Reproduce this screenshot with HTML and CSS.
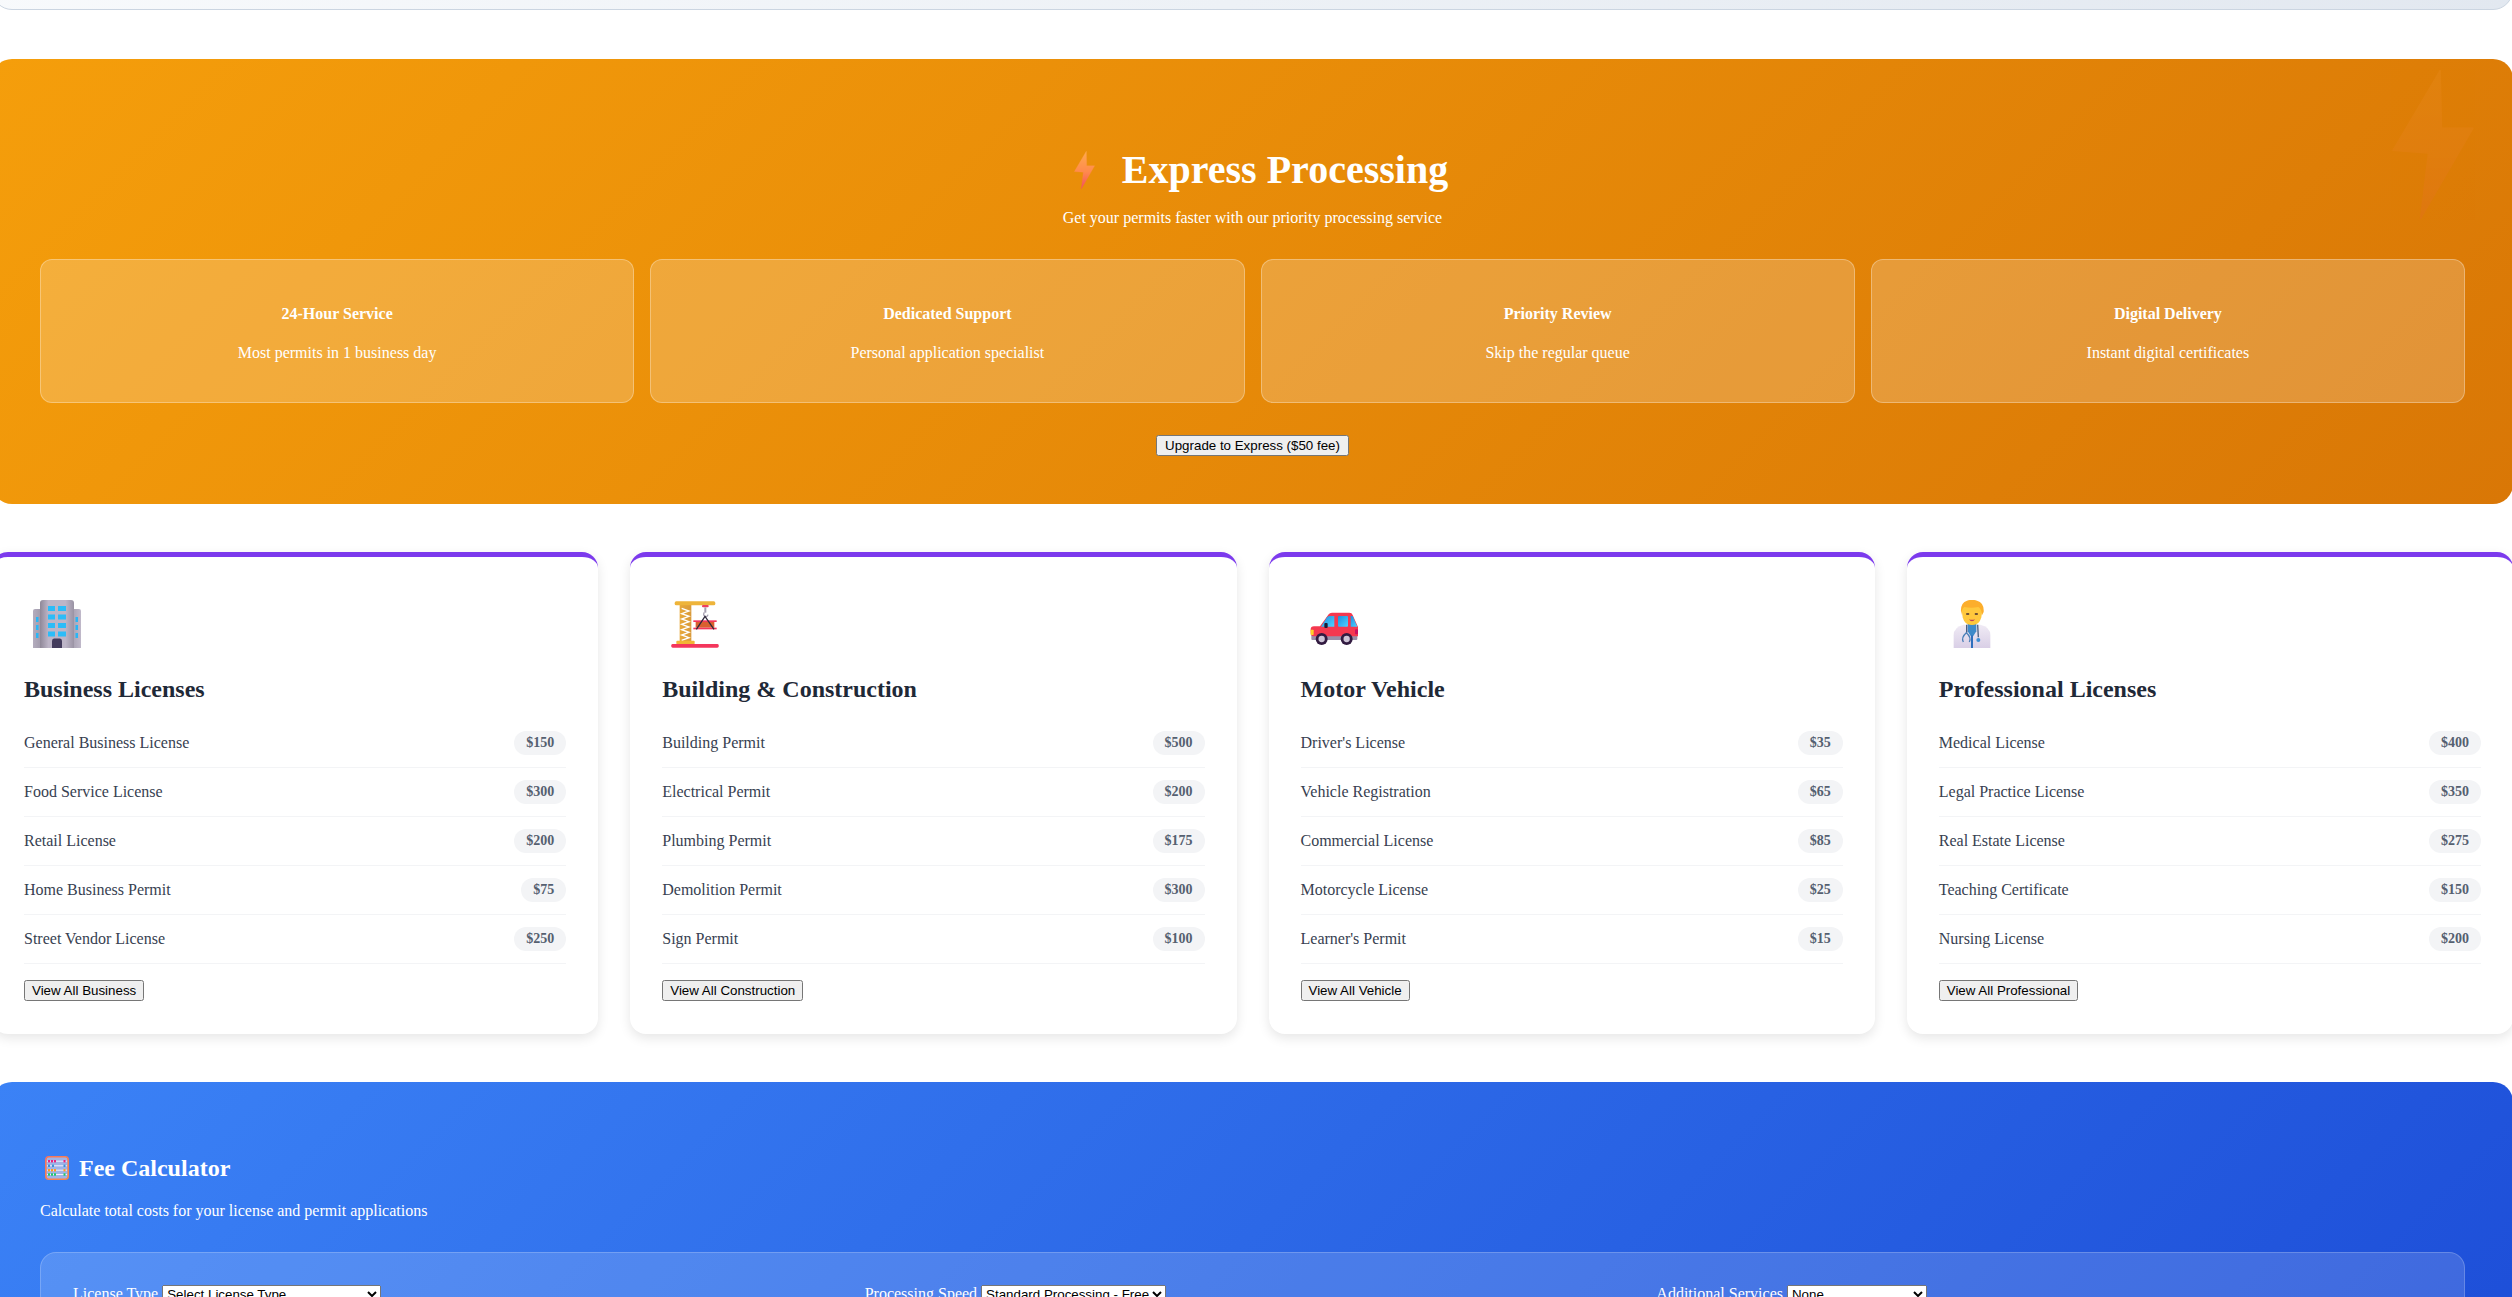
FILE: index.html
```html
<!DOCTYPE html>
<html>
  <head>
    <meta name="viewport" content="width=device-width,initial-scale=1.0">
    <title>Licenses and Permits</title>
    <link rel="stylesheet" href="styles.css">
  </head>

  <body>
    <svg class="defs" width="0" height="0" aria-hidden="true">
      <defs>
        <linearGradient id="bolt-fill" x1="0.5" y1="0" x2="0.5" y2="1">
          <stop offset="0" stop-color="#ffa94d"/>
          <stop offset="0.55" stop-color="#ff8a4d"/>
          <stop offset="1" stop-color="#f24f5e"/>
        </linearGradient>
        <linearGradient id="tower-fill" x1="0" y1="0" x2="1" y2="0">
          <stop offset="0" stop-color="#8f8898"/>
          <stop offset="0.25" stop-color="#bdb5c7"/>
          <stop offset="0.75" stop-color="#bdb5c7"/>
          <stop offset="1" stop-color="#9a93a4"/>
        </linearGradient>
        <linearGradient id="wing-fill" x1="0" y1="0" x2="1" y2="0">
          <stop offset="0" stop-color="#b4adbe"/>
          <stop offset="0.5" stop-color="#7c7687"/>
          <stop offset="1" stop-color="#c0b9ca"/>
        </linearGradient>
        <linearGradient id="mast-fill" x1="0" y1="0" x2="1" y2="0">
          <stop offset="0" stop-color="#e8a93a"/>
          <stop offset="1" stop-color="#d99a3a"/>
        </linearGradient>
        <linearGradient id="glass-fill" x1="0" y1="0" x2="1" y2="1">
          <stop offset="0" stop-color="#1c8fe0"/>
          <stop offset="1" stop-color="#4fd2ff"/>
        </linearGradient>
        <linearGradient id="coat-fill" x1="0" y1="0" x2="0" y2="1">
          <stop offset="0" stop-color="#f0ebf5"/>
          <stop offset="1" stop-color="#d9cfe6"/>
        </linearGradient>
        <linearGradient id="abacus-frame" x1="0" y1="0" x2="1" y2="1">
          <stop offset="0" stop-color="#f9735b"/>
          <stop offset="1" stop-color="#f5894a"/>
        </linearGradient>
      </defs>
    </svg>

    <div class="page">
      <div class="top-strip"></div>

      <!-- Express -->
      <section class="express">
        <svg class="express-mark" viewBox="0 0 63 115"><path d="M37 1 1 62 28 64 22 114 62 45 38 45Z" fill="url(#bolt-fill)" stroke="url(#bolt-fill)" stroke-linejoin="round"/></svg>
        <h2 class="express-title">
          <svg class="bolt" viewBox="0 0 63 115"><path d="M37 1 1 62 28 64 22 114 62 45 38 45Z" fill="url(#bolt-fill)" stroke="url(#bolt-fill)" stroke-linejoin="round"/></svg>
          Express Processing
        </h2>
        <p class="express-sub">Get your permits faster with our priority processing service</p>
        <div class="features">
          <div class="feature">
            <h4>24-Hour Service</h4>
            <p>Most permits in 1 business day</p>
          </div>
          <div class="feature">
            <h4>Dedicated Support</h4>
            <p>Personal application specialist</p>
          </div>
          <div class="feature">
            <h4>Priority Review</h4>
            <p>Skip the regular queue</p>
          </div>
          <div class="feature">
            <h4>Digital Delivery</h4>
            <p>Instant digital certificates</p>
          </div>
        </div>
        <button class="express-btn">Upgrade to Express ($50 fee)</button>
      </section>

      <!-- License categories -->
      <section class="categories">
        <div class="category">
          <svg class="category-icon" viewBox="0 0 48 48">
            <path d="M0 11q0-2 2-2h44q2 0 2 2v37H0Z" fill="url(#wing-fill)"/>
            <g fill="#29b6f6">
              <rect x="3" y="17" width="2.5" height="5"/><rect x="3" y="25" width="2.5" height="5"/><rect x="3" y="33" width="2.5" height="5"/>
              <rect x="42.5" y="17" width="2.5" height="5"/><rect x="42.5" y="25" width="2.5" height="5"/><rect x="42.5" y="33" width="2.5" height="5"/>
            </g>
            <path d="M7 3q0-3 3-3h28q3 0 3 3v45H7Z" fill="url(#tower-fill)"/>
            <g fill="#2cbcf8">
              <rect x="15" y="6" width="7" height="5"/><rect x="25" y="6" width="8" height="5"/>
              <rect x="15" y="14.5" width="7" height="5"/><rect x="25" y="14.5" width="8" height="5"/>
              <rect x="15" y="23" width="7" height="5"/><rect x="25" y="23" width="8" height="5"/>
              <rect x="15" y="31.5" width="7" height="5"/><rect x="25" y="31.5" width="8" height="5"/>
            </g>
            <path d="M19 41q0-2.500 2-2.500h6q2 0 2 2.500v7H19Z" fill="#433b5c"/>
          </svg>
          <h3>Business Licenses</h3>
          <ul class="fees">
            <li><span>General Business License</span><span class="price">$150</span></li>
            <li><span>Food Service License</span><span class="price">$300</span></li>
            <li><span>Retail License</span><span class="price">$200</span></li>
            <li><span>Home Business Permit</span><span class="price">$75</span></li>
            <li><span>Street Vendor License</span><span class="price">$250</span></li>
          </ul>
          <button class="category-btn">View All Business</button>
        </div>

        <div class="category">
          <svg class="category-icon" viewBox="184 181 144 144">
            <rect x="210" y="195" width="35" height="112" fill="url(#mast-fill)"/>
            <path d="M216 206 238 214 216 222 238 230 216 238 238 246 216 254 238 262 216 270 238 278 216 286 238 294 216 302" fill="none" stroke="#fff" stroke-width="4"/>
            <rect x="195" y="185" width="122" height="12" rx="5" fill="#eeb43a"/>
            <rect x="200" y="303" width="55" height="11" rx="3" fill="#f2b535"/>
            <rect x="185" y="313" width="142" height="11" rx="4" fill="#f4365c"/>
            <rect x="277" y="196" width="20" height="7" rx="3" fill="#ef3f5f"/>
            <rect x="284" y="203" width="6" height="16" fill="#a59fb0"/>
            <path d="M284 218q-5 8 2 12 7 3 9-5" fill="none" stroke="#a59fb0" stroke-width="4"/>
            <rect x="251" y="242" width="70" height="5" fill="#f4365c"/>
            <rect x="258" y="247" width="56" height="17" fill="#d9602f"/>
            <rect x="251" y="264" width="70" height="5" fill="#f4365c"/>
            <path d="M260 269 286 230 313 269" fill="none" stroke="#2f2a3c" stroke-width="4"/>
          </svg>
          <h3>Building &amp; Construction</h3>
          <ul class="fees">
            <li><span>Building Permit</span><span class="price">$500</span></li>
            <li><span>Electrical Permit</span><span class="price">$200</span></li>
            <li><span>Plumbing Permit</span><span class="price">$175</span></li>
            <li><span>Demolition Permit</span><span class="price">$300</span></li>
            <li><span>Sign Permit</span><span class="price">$100</span></li>
          </ul>
          <button class="category-btn">View All Construction</button>
        </div>

        <div class="category">
          <svg class="category-icon" viewBox="148 180 144 144">
            <rect x="152" y="284" width="138" height="16" rx="3" fill="#9b8fa8"/>
            <path d="M150 268q0-9 10-9h18l26-36q3-5 10-5h52q8 0 10 7l15 34q2 3 1 7v23H160q-10 0-10-10Z" fill="#f5384f"/>
            <path d="M181 260 199 232q3-4 8-4h14v32Z" fill="url(#glass-fill)"/>
            <rect x="232" y="228" width="30" height="32" rx="3" fill="url(#glass-fill)"/>
            <path d="M270 228h6l14 32h-20Z" fill="url(#glass-fill)"/>
            <rect x="191" y="249" width="10" height="15" rx="3" fill="#1f1a35"/>
            <rect x="150" y="269" width="9" height="16" rx="2" fill="#ffd028"/>
            <rect x="283" y="268" width="9" height="15" rx="3" fill="#cc0f5f"/>
            <circle cx="183" cy="297" r="18" fill="#321b41"/>
            <circle cx="183" cy="297" r="9.500" fill="#cdc4d6"/>
            <circle cx="258" cy="297" r="18" fill="#321b41"/>
            <circle cx="258" cy="297" r="9.500" fill="#cdc4d6"/>
          </svg>
          <h3>Motor Vehicle</h3>
          <ul class="fees">
            <li><span>Driver's License</span><span class="price">$35</span></li>
            <li><span>Vehicle Registration</span><span class="price">$65</span></li>
            <li><span>Commercial License</span><span class="price">$85</span></li>
            <li><span>Motorcycle License</span><span class="price">$25</span></li>
            <li><span>Learner's Permit</span><span class="price">$15</span></li>
          </ul>
          <button class="category-btn">View All Vehicle</button>
        </div>

        <div class="category">
          <svg class="category-icon" viewBox="173 180 144 144">
            <path d="M190 324v-38q0-26 30-32h50q30 6 30 32v38Z" fill="url(#coat-fill)"/>
            <path d="M232 252h26v22l-13 20-13-20Z" fill="#3f8ac9"/>
            <rect x="242" y="286" width="6" height="38" fill="#2f6fbd"/>
            <path d="M229 254v24M262 254l2 38" fill="none" stroke="#4b5f80" stroke-width="4"/>
            <path d="M219 306q-7-14 9-28 16 14 9 28" fill="none" stroke="#4a7fb8" stroke-width="4"/>
            <circle cx="264" cy="300" r="6" fill="#3f8fd6"/>
            <path d="M216 196q-4 16 1 36l4 10q8 13 24 13t24-13l4-10q5-20 1-36Z" fill="#ffc83d"/>
            <path d="M212 216q-2-28 18-34 15-5 30 0 22 6 20 34l-5 10q-1-20-11-25-22 5-42 0-9 5-8 25Z" fill="#fcae2c"/>
            <rect x="227" y="220" width="10" height="4" rx="2" fill="#402a32"/>
            <rect x="253" y="220" width="10" height="4" rx="2" fill="#402a32"/>
            <path d="M236 238q9 3 18 0-3 6-9 6t-9-6Z" fill="#c4405a"/>
          </svg>
          <h3>Professional Licenses</h3>
          <ul class="fees">
            <li><span>Medical License</span><span class="price">$400</span></li>
            <li><span>Legal Practice License</span><span class="price">$350</span></li>
            <li><span>Real Estate License</span><span class="price">$275</span></li>
            <li><span>Teaching Certificate</span><span class="price">$150</span></li>
            <li><span>Nursing License</span><span class="price">$200</span></li>
          </ul>
          <button class="category-btn">View All Professional</button>
        </div>
      </section>

      <!-- Calculator -->
      <section class="calculator">
        <h3 class="calculator-title">
          <svg class="abacus" viewBox="0 0 24 24">
            <rect x="0.8" y="0.8" width="22.400" height="22.400" rx="3" fill="#9fb3e6" stroke="url(#abacus-frame)" stroke-width="1.600"/>
            <g stroke-width="1">
              <path d="M2 5.200h20" stroke="#f5f0fa"/><path d="M2 9.800h20" stroke="#f5f0fa"/><path d="M2 14.200h20" stroke="#f5f0fa"/><path d="M2 18.500h20" stroke="#f5f0fa"/>
            </g>
            <g fill="#e8237f"><rect x="3" y="4" width="2" height="2.400"/><rect x="6" y="4" width="2" height="2.400"/><rect x="9" y="4" width="2" height="2.400"/><rect x="18.500" y="4" width="2" height="2.400"/></g>
            <g fill="#3f8fd6"><rect x="3" y="8.600" width="2" height="2.400"/><rect x="7" y="8.600" width="2" height="2.400"/><rect x="18.500" y="8.600" width="2" height="2.400"/></g>
            <g fill="#ff9a1f"><rect x="3" y="13" width="2" height="2.400"/><rect x="6" y="13" width="2" height="2.400"/><rect x="9" y="13" width="2" height="2.400"/><rect x="18.500" y="13" width="2" height="2.400"/></g>
            <g fill="#1fc96a"><rect x="3" y="17.300" width="2" height="2.400"/><rect x="6" y="17.300" width="2" height="2.400"/><rect x="9" y="17.300" width="2" height="2.400"/><rect x="18.500" y="17.300" width="2" height="2.400"/></g>
          </svg>
          Fee Calculator
        </h3>
        <p class="calculator-sub">Calculate total costs for your license and permit applications</p>
        <form class="calculator-form">
          <label>License Type
            <select class="select-type"><option>Select License Type</option></select>
          </label>
          <label>Processing Speed
            <select class="select-speed"><option>Standard Processing - Free</option></select>
          </label>
          <label>Additional Services
            <select class="select-extra"><option>None</option></select>
          </label>
        </form>
      </section>
    </div>
  </body>
</html>
```

FILE: styles.css
```css
html, body { margin: 0; height: 100%; overflow: hidden; background: #fff; }
body { font-family: "Liberation Serif", "Times New Roman", serif; font-size: 16px; }
.defs { position: absolute; }

button, select { font-family: "Liberation Sans", Arial, sans-serif; font-size: 13.333px; }

/* Page runs past both sides of the window */
.page { margin-left: -8px; width: 2521px; }

.top-strip {
  height: 60px;
  margin-top: -50px;
  margin-bottom: 49px;
  background: linear-gradient(135deg, #f8fafc, #e2e8f0);
  border: 1px solid #cbd5e1;
  border-radius: 20px;
  box-sizing: border-box;
}

/* Express */
.express {
  position: relative;
  padding: 48px;
  border-radius: 20px;
  background: linear-gradient(135deg, #f59e0b, #d97706);
  color: #fff;
  text-align: center;
  overflow: hidden;
}
.express-mark {
  position: absolute;
  top: 10px;
  right: 36px;
  width: 88px;
  height: 151px;
  opacity: 0.1;
}
.express-title {
  display: flex;
  align-items: center;
  justify-content: center;
  margin: 36px 0 13px;
  height: 53px;
  font-size: 40px;
  line-height: 53px;
}
.bolt {
  width: 55px;
  height: 38px;
  margin-right: 10px;
}
.express-sub { margin: 0 0 32px; }

.features {
  display: grid;
  grid-template-columns: repeat(4, 1fr);
  gap: 16px;
  margin-bottom: 32px;
}
.feature {
  padding: 24px;
  background: rgba(255, 255, 255, 0.2);
  border: 1px solid rgba(255, 255, 255, 0.3);
  border-radius: 12px;
}
.feature h4 { margin: 21px 0; font-size: 16px; }
.feature p { margin: 0 0 16px; }
.express-btn { display: block; margin: 0 auto; padding: 1px 7px; }

/* License categories */
.categories {
  display: grid;
  grid-template-columns: repeat(4, 1fr);
  gap: 32px;
  margin: 48px 0;
}
.category {
  padding: 32px 32px 33px;
  background: #fff;
  border-top: 5px solid #7c3aed;
  border-radius: 16px;
  box-shadow: 0 4px 12px rgba(0, 0, 0, 0.1);
}
.category-icon {
  display: block;
  width: 48px;
  height: 48px;
  margin: 11px 0 0 9px;
}
.category h3 {
  margin: 28px 0 16px;
  font-size: 24px;
  color: #1f2937;
}
.fees { list-style-type: none; margin: 0; padding: 0; }
.fees li {
  display: flex;
  align-items: center;
  justify-content: space-between;
  padding: 12px 0;
  border-bottom: 1px solid #f3f4f6;
  color: #374151;
}
.price {
  padding: 4px 12px;
  border-radius: 12px;
  background: #f3f4f6;
  color: #556070;
  font-size: 14px;
  font-weight: bold;
  line-height: 16px;
}
.category-btn { display: block; margin-top: 16px; }

/* Calculator */
.calculator {
  padding: 48px;
  border-radius: 20px;
  background: linear-gradient(135deg, #3b82f6, #1d4ed8);
  color: #fff;
}
.calculator-title {
  display: flex;
  align-items: center;
  margin: 22px 0 18px;
  height: 32px;
  font-size: 24px;
  line-height: 32px;
}
.abacus {
  width: 24px;
  height: 24px;
  margin: 0 10px 0 5px;
}
.calculator-sub { margin: 0 0 32px; }
.calculator-form {
  display: grid;
  grid-template-columns: repeat(3, 1fr);
  gap: 16px;
  padding: 32px;
  background: rgba(255, 255, 255, 0.15);
  border: 1px solid rgba(255, 255, 255, 0.2);
  border-radius: 16px;
}
.select-type { width: 219px; }
.select-speed { width: 185px; }
.select-extra { width: 140px; }
```
